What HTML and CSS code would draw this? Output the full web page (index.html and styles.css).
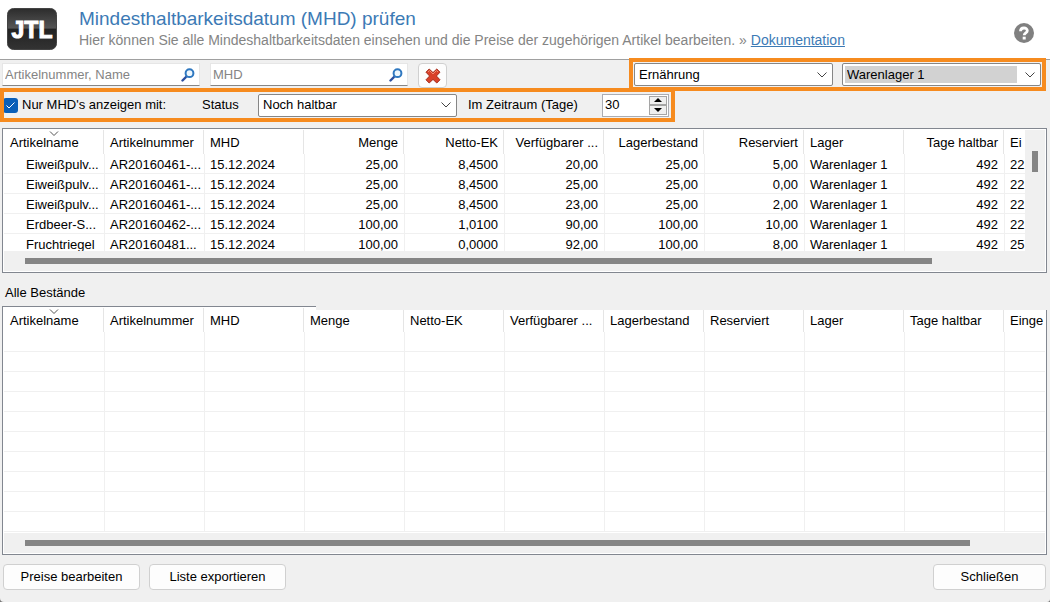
FILE: index.html
```html
<!DOCTYPE html>
<html lang="de">
<head>
<meta charset="utf-8">
<title>Mindesthaltbarkeitsdatum (MHD) prüfen</title>
<link rel="stylesheet" href="styles.css">
</head>
<body>
<div class="window">
  <header class="header">
    <svg class="logo" viewBox="0 0 50 42" role="img" aria-label="JTL">
      <defs>
        <linearGradient id="badge" x1="0" y1="0" x2="0" y2="1">
          <stop offset="0" stop-color="#2c2c2c"/>
          <stop offset=".48" stop-color="#555"/>
          <stop offset=".5" stop-color="#222"/>
          <stop offset="1" stop-color="#333"/>
        </linearGradient>
      </defs>
      <rect x=".5" y=".5" width="49" height="41" rx="6" fill="url(#badge)" stroke="#444"/>
      <text class="logo-text" x="25" y="30" text-anchor="middle">JTL</text>
    </svg>
    <div class="heading">
      <h1 class="title">Mindesthaltbarkeitsdatum (MHD) prüfen</h1>
      <p class="subtitle"><span>Hier können Sie alle Mindeshaltbarkeitsdaten einsehen und die Preise der zugehörigen Artikel bearbeiten.</span><span>» <a class="link" href="#">Dokumentation</a></span></p>
    </div>
    <button class="help" type="button" aria-label="Hilfe">
      <svg viewBox="0 0 20 20" width="20" height="20"><circle cx="10" cy="10" r="10" fill="#808080"/><path d="M6.500 8.200C6.500 4 13.300 4 13.300 7.700 13.300 10 10.200 9.800 10.200 12.300" fill="none" stroke="#fff" stroke-width="2.800"/><rect x="8.700" y="13.700" width="3" height="2.800" fill="#fff"/></svg>
    </button>
  </header>

  <div class="toolbar">
    <div class="search">
      <input class="search-input" type="text" placeholder="Artikelnummer, Name" aria-label="Artikelnummer, Name">
      <svg class="search-icon" viewBox="0 0 14 14"><path d="M1.500 12.500 5.500 8.500" stroke="#2a4fa0" stroke-width="2.400" stroke-linecap="round"/><circle cx="8.500" cy="5.200" r="3.900" fill="#eef7fd" stroke="#2f78c0" stroke-width="2"/></svg>
    </div>
    <div class="search">
      <input class="search-input" type="text" placeholder="MHD" aria-label="MHD">
      <svg class="search-icon" viewBox="0 0 14 14"><path d="M1.500 12.500 5.500 8.500" stroke="#2a4fa0" stroke-width="2.400" stroke-linecap="round"/><circle cx="8.500" cy="5.200" r="3.900" fill="#eef7fd" stroke="#2f78c0" stroke-width="2"/></svg>
    </div>
    <button class="button clear" type="button" aria-label="Filter löschen">
      <svg viewBox="0 0 16 16" width="16" height="16"><path d="M4.200 1 8 4.600 11.800 1 15 4.200 11.400 8 15 11.800 11.800 15 8 11.400 4.200 15 1 11.800 4.600 8 1 4.200Z" fill="#d9412a" stroke="#a52c1a" stroke-linejoin="round"/><path d="M3 4 4.500 2.500 8 6 11.500 2.500 13 4" fill="none" stroke="#f28a70"/></svg>
    </button>
    <div class="group group-right marked">
      <select class="select" aria-label="Kategorie"><option>Ernährung</option></select>
      <select class="select select-active" aria-label="Lager"><option>Warenlager 1</option></select>
    </div>
  </div>

  <div class="filterbar">
    <div class="group marked marked-filter">
      <label class="check"><input class="checkbox" type="checkbox" checked>Nur MHD's anzeigen mit:</label>
      <label class="label-status" for="status">Status</label>
      <select class="select" id="status"><option>Noch haltbar</option></select>
      <label class="label-days" for="days">Im Zeitraum (Tage)</label>
      <div class="spinner">
        <input class="spinner-input" id="days" type="text" value="30">
        <div class="spinner-buttons">
          <button class="step" type="button" aria-label="Mehr"><svg viewBox="0 0 8 4" width="8" height="4"><path d="M0 4 4 0 8 4Z"/></svg></button>
          <button class="step" type="button" aria-label="Weniger"><svg viewBox="0 0 8 4" width="8" height="4"><path d="M0 0 4 4 8 0Z"/></svg></button>
        </div>
      </div>
    </div>
  </div>

  <section class="grid grid-top">
    <div class="grid-main">
      <div class="viewport">
        <table class="table">
          <thead><tr>
            <th class="sorted">Artikelname<svg class="sort" viewBox="0 0 10 6"><path d="M1 .5 5 4.500 9 .5" fill="none" stroke="#555"/></svg></th><th>Artikelnummer</th><th>MHD</th><th class="num">Menge</th><th class="num">Netto-EK</th><th class="num">Verfügbarer ...</th><th class="num">Lagerbestand</th><th class="num">Reserviert</th><th>Lager</th><th class="num">Tage haltbar</th><th>Ei</th>
          </tr></thead>
          <tbody>
            <tr><td class="name">Eiweißpulv...</td><td>AR20160461-...</td><td>15.12.2024</td><td class="num">25,00</td><td class="num">8,4500</td><td class="num">20,00</td><td class="num">25,00</td><td class="num">5,00</td><td>Warenlager 1</td><td class="num">492</td><td>22</td></tr>
            <tr><td class="name">Eiweißpulv...</td><td>AR20160461-...</td><td>15.12.2024</td><td class="num">25,00</td><td class="num">8,4500</td><td class="num">25,00</td><td class="num">25,00</td><td class="num">0,00</td><td>Warenlager 1</td><td class="num">492</td><td>22</td></tr>
            <tr><td class="name">Eiweißpulv...</td><td>AR20160461-...</td><td>15.12.2024</td><td class="num">25,00</td><td class="num">8,4500</td><td class="num">23,00</td><td class="num">25,00</td><td class="num">2,00</td><td>Warenlager 1</td><td class="num">492</td><td>22</td></tr>
            <tr><td class="name">Erdbeer-S...</td><td>AR20160462-...</td><td>15.12.2024</td><td class="num">100,00</td><td class="num">1,0100</td><td class="num">90,00</td><td class="num">100,00</td><td class="num">10,00</td><td>Warenlager 1</td><td class="num">492</td><td>22</td></tr>
            <tr><td class="name">Fruchtriegel</td><td>AR20160481...</td><td>15.12.2024</td><td class="num">100,00</td><td class="num">0,0000</td><td class="num">92,00</td><td class="num">100,00</td><td class="num">8,00</td><td>Warenlager 1</td><td class="num">492</td><td>25</td></tr>
          </tbody>
        </table>
      </div>
      <div class="scroll-y"><div class="thumb-y"></div></div>
    </div>
    <div class="scroll-x scroll-x-top"><div class="thumb-x"></div></div>
  </section>

  <h2 class="section-title">Alle Bestände</h2>

  <section class="grid grid-bottom">
    <div class="grid-main">
      <div class="viewport">
        <table class="table">
          <thead><tr>
            <th class="sorted">Artikelname<svg class="sort" viewBox="0 0 10 6"><path d="M1 .5 5 4.500 9 .5" fill="none" stroke="#555"/></svg></th><th>Artikelnummer</th><th>MHD</th><th>Menge</th><th>Netto-EK</th><th>Verfügbarer ...</th><th>Lagerbestand</th><th>Reserviert</th><th>Lager</th><th>Tage haltbar</th><th>Einge</th>
          </tr></thead>
          <tbody>
            <tr><td></td><td></td><td></td><td></td><td></td><td></td><td></td><td></td><td></td><td></td><td></td></tr>
            <tr><td></td><td></td><td></td><td></td><td></td><td></td><td></td><td></td><td></td><td></td><td></td></tr>
            <tr><td></td><td></td><td></td><td></td><td></td><td></td><td></td><td></td><td></td><td></td><td></td></tr>
            <tr><td></td><td></td><td></td><td></td><td></td><td></td><td></td><td></td><td></td><td></td><td></td></tr>
            <tr><td></td><td></td><td></td><td></td><td></td><td></td><td></td><td></td><td></td><td></td><td></td></tr>
            <tr><td></td><td></td><td></td><td></td><td></td><td></td><td></td><td></td><td></td><td></td><td></td></tr>
            <tr><td></td><td></td><td></td><td></td><td></td><td></td><td></td><td></td><td></td><td></td><td></td></tr>
            <tr><td></td><td></td><td></td><td></td><td></td><td></td><td></td><td></td><td></td><td></td><td></td></tr>
            <tr><td></td><td></td><td></td><td></td><td></td><td></td><td></td><td></td><td></td><td></td><td></td></tr>
            <tr><td></td><td></td><td></td><td></td><td></td><td></td><td></td><td></td><td></td><td></td><td></td></tr>
          </tbody>
        </table>
      </div>
    </div>
    <div class="scroll-x scroll-x-bottom"><div class="thumb-x"></div></div>
  </section>

  <footer class="footer">
    <button class="button action" type="button">Preise bearbeiten</button>
    <button class="button action" type="button">Liste exportieren</button>
    <button class="button action action-close" type="button">Schließen</button>
  </footer>
</div>
</body>
</html>
```

FILE: styles.css
```css
* { box-sizing: border-box; }

body {
  margin: 0;
  background: #777;
  color: #000;
  font: 13px/16px "Liberation Sans", Arial, sans-serif;
}

input, select, button { font: inherit; color: inherit; margin: 0; }

.window {
  display: flex;
  flex-direction: column;
  min-height: 100vh;
  background: #f0f0f0;
  border-radius: 0 0 3px 4px;
  overflow: hidden;
}

/* Header */
.header {
  display: flex;
  align-items: flex-start;
  padding: 8px 16px 8px 7px;
  height: 60px;
  background: #fff;
  border-bottom: 1px solid #a0a0a0;
}
.logo { width: 50px; height: 42px; }
.logo-text {
  font: bold 23px "Liberation Sans", Arial, sans-serif;
  fill: #fff;
  stroke: #fff;
}
.heading { flex: 1; margin-left: 22px; }
.title {
  margin: 0;
  font-size: 19px;
  line-height: 22px;
  font-weight: normal;
  color: #3c7ab5;
}
.subtitle {
  display: flex;
  gap: 4px;
  margin: 2px 0 0;
  font-size: 14px;
  color: #848484;
}
.link { color: #3c7ab5; }
.help {
  align-self: center;
  display: flex;
  padding: 0;
  border: 0;
  background: none;
  margin-top: 7px;
}

/* Filter rows */
.toolbar {
  display: flex;
  gap: 10px;
  padding: 3px 9px 0 2px;
  height: 29px;
}
.search { position: relative; width: 198px; height: 23px; }
.search-input {
  width: 100%;
  height: 23px;
  padding: 0 28px 0 2px;
  border: 1px solid #e6e6e6;
  border-bottom-color: #868686;
  background: #fff;
}
.search-input::placeholder { color: #848484; opacity: 1; }
.search-icon { position: absolute; right: 5px; top: 5px; width: 14px; height: 14px; fill: none; }
.button {
  display: flex;
  align-items: center;
  justify-content: center;
  background: #fdfdfd;
  border: 1px solid #d0d0d0;
  border-radius: 4px;
}
.clear { width: 29px; height: 25px; padding: 0; }

.group { display: flex; align-items: center; position: relative; }
.group-right { margin-left: auto; gap: 9px; height: 23px; }
.marked::after {
  content: "";
  position: absolute;
  inset: -5px;
  border: 4px solid #f68b1f;
  pointer-events: none;
}
.filterbar { display: flex; padding: 4px 0 0; height: 39px; }
.marked-filter { height: 24px; padding-right: 1px; }
.marked-filter::after { left: 0; }

.select {
  appearance: none;
  width: 199px;
  height: 23px;
  padding: 0 20px 0 4px;
  border: 1px solid #868686;
  border-radius: 2px;
  background: #fff url("data:image/svg+xml,%3Csvg xmlns='http://www.w3.org/2000/svg' width='10' height='6'%3E%3Cpath d='M.5.5 5 5 9.500.5' fill='none' stroke='%23444'/%3E%3C/svg%3E") no-repeat right 5px center;
}
.select-active {
  background-image: url("data:image/svg+xml,%3Csvg xmlns='http://www.w3.org/2000/svg' width='10' height='6'%3E%3Cpath d='M.5.5 5 5 9.500.5' fill='none' stroke='%23444'/%3E%3C/svg%3E"), linear-gradient(#d2d2d2, #d2d2d2);
  background-position: right 5px center, 2px 2px;
  background-size: 10px 6px, calc(100% - 25px) calc(100% - 4px);
}
.check { display: flex; align-items: center; gap: 4px; width: 202px; padding-left: 3px; }
.checkbox {
  appearance: none;
  width: 15px;
  height: 15px;
  border-radius: 3px;
  background: #0a5fb8 url("data:image/svg+xml,%3Csvg xmlns='http://www.w3.org/2000/svg' width='9' height='7'%3E%3Cpath d='M.5 3.500 3 6 8.500.5' fill='none' stroke='white'/%3E%3C/svg%3E") no-repeat center;
}
.label-status { width: 56px; }
.label-days { width: 134px; margin-left: 11px; }
.spinner {
  display: flex;
  width: 67px;
  height: 23px;
  padding: 1px;
  border: 1px solid #abadb3;
  background: #fff;
}
.spinner-input { flex: 1; min-width: 0; padding: 0 0 0 1px; border: 0; }
.spinner-buttons { display: flex; flex-direction: column; width: 18px; }
.step {
  flex: 1;
  display: flex;
  align-items: center;
  justify-content: center;
  padding: 0;
  border: 1px solid #a5a5a5;
  background: #efefef;
}

/* Data grids */
.grid {
  margin: 0 3px 0 2px;
  padding: 1px;
  border: 1px solid #828790;
  background: #fff;
}
.grid-main { display: flex; }
.viewport { flex: 1; min-width: 0; overflow: hidden; }
.grid-top .viewport { height: 121px; }
.grid-bottom .viewport { height: 225px; }
.table { width: 1100px; table-layout: fixed; border-collapse: separate; border-spacing: 0; }
.table th, .table td { overflow: hidden; white-space: nowrap; text-align: left; font-weight: normal; }
.table th { height: 24px; padding: 2px 5px 0 6px; border-right: 1px solid #e5e5e5; }
.table td { height: 20px; padding: 2px 6px 0 5px; border-left: 1px solid #f0f0f0; border-bottom: 1px solid #f0f0f0; }
.table td:first-child { border-left: 0; }
.table td.name { padding: 2px 0 0 22px; }
.table .num { text-align: right; }
.sorted { position: relative; }
.sort { position: absolute; left: 45px; top: 1px; width: 10px; height: 6px; }

.scroll-y { width: 20px; padding-top: 21px; background: #f0f0f0; }
.thumb-y { width: 6px; height: 21px; margin-left: 7px; background: #858585; }
.scroll-x { height: 20px; padding: 7px 0 0 21px; background: #f0f0f0; }
.thumb-x { height: 6px; background: #858585; }
.scroll-x-top { padding-right: 113px; }
.scroll-x-bottom { padding-right: 75px; }

.section-title { margin: 12px 0 5px 5px; font-size: 13px; line-height: 16px; font-weight: normal; }
.grid-bottom { position: relative; }
.grid-bottom::before {
  content: "";
  position: absolute;
  left: 313px;
  right: -1px;
  top: -1px;
  height: 4px;
  background: #f0f0f0;
}

.footer { display: flex; gap: 9px; padding: 9px 4px 12px 3px; }
.action { width: 137px; height: 26px; padding: 0; }
.action-close { width: 113px; margin-left: auto; }
```
